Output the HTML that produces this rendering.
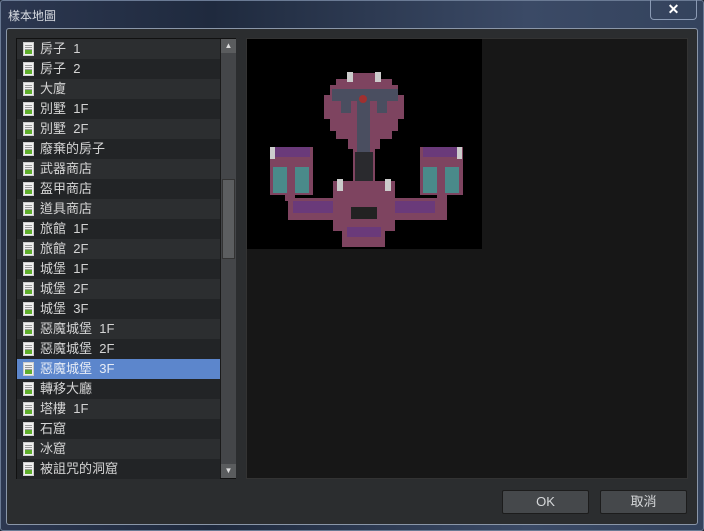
<!DOCTYPE html>
<html><head><meta charset="utf-8"><style>
*{margin:0;padding:0;box-sizing:border-box}
body{width:704px;height:531px;overflow:hidden;background:#1c2433;font-family:"Liberation Sans","Noto Sans CJK TC",sans-serif;position:relative}
.win{position:absolute;left:0;top:0;width:704px;height:531px;background:linear-gradient(90deg,#2c3750 0%,#1f2a3e 30%,#3b4a66 75%,#34435d 100%);border:1px solid #6a7a94;border-radius:3px}
.title{position:absolute;left:8px;top:7px;color:#d8dce2;font-size:12px}
.close{position:absolute;left:650px;top:0;width:47px;height:20px;border:1px solid #8a9ab4;border-top:none;border-radius:0 0 4px 4px;color:#fff;font-weight:bold;font-size:14px;text-align:center;line-height:18px}
.panel{position:absolute;left:6px;top:28px;width:692px;height:497px;background:#2b2d2f;border:1px solid #8a96a8;border-radius:3px}
.list{position:absolute;left:16px;top:38px;width:220px;height:441px;background:#242628;border:1px solid #111}
.row{position:absolute;left:0;width:203px;height:20px;color:#d4d4d4;font-size:13px;line-height:20px;padding-left:23px;white-space:pre}
.row:nth-child(odd){background:#2c2e30}
.row:nth-child(even){background:#222426}
.row.sel{background:#5c86cc;color:#e6ecf6}
.ic{position:absolute;left:6px;top:3px;width:11px;height:14px;background:#f0f0f0;border:1px solid #ccc}
.ic:before{content:"";position:absolute;left:1px;right:1px;top:2px;height:5px;background:repeating-linear-gradient(#999 0 1px,transparent 1px 2px)}
.ic:after{content:"";position:absolute;left:1px;right:1px;bottom:1px;height:4px;background:#5fae2c}
.sb{position:absolute;left:203px;top:0;width:16px;height:439px;background:#444649;border-left:1px solid #1a1a1a}
.sbb{position:absolute;left:0;width:15px;height:14px;background:#5a5c5e;color:#ddd;font-size:8px;text-align:center;line-height:14px}
.thumb{position:absolute;left:1px;top:140px;width:13px;height:80px;background:#5c5e60;border:1px solid #333}
.prev{position:absolute;left:246px;top:38px;width:442px;height:441px;background:#171717;border:1px solid #333}
.btn{position:absolute;top:490px;width:87px;height:24px;background:#45484b;border:1px solid #1c1c1c;border-radius:2px;color:#d6d8da;font-size:13px;text-align:center;line-height:22px}
</style></head><body>
<div class="win"></div>
<div class="title">樣本地圖</div>
<div class="close">✕</div>
<div class="panel"></div>
<div class="list">
<div class="row" style="top:0"><i class="ic"></i>房子  1</div>
<div class="row" style="top:20px"><i class="ic"></i>房子  2</div>
<div class="row" style="top:40px"><i class="ic"></i>大廈</div>
<div class="row" style="top:60px"><i class="ic"></i>別墅  1F</div>
<div class="row" style="top:80px"><i class="ic"></i>別墅  2F</div>
<div class="row" style="top:100px"><i class="ic"></i>廢棄的房子</div>
<div class="row" style="top:120px"><i class="ic"></i>武器商店</div>
<div class="row" style="top:140px"><i class="ic"></i>盔甲商店</div>
<div class="row" style="top:160px"><i class="ic"></i>道具商店</div>
<div class="row" style="top:180px"><i class="ic"></i>旅館  1F</div>
<div class="row" style="top:200px"><i class="ic"></i>旅館  2F</div>
<div class="row" style="top:220px"><i class="ic"></i>城堡  1F</div>
<div class="row" style="top:240px"><i class="ic"></i>城堡  2F</div>
<div class="row" style="top:260px"><i class="ic"></i>城堡  3F</div>
<div class="row" style="top:280px"><i class="ic"></i>惡魔城堡  1F</div>
<div class="row" style="top:300px"><i class="ic"></i>惡魔城堡  2F</div>
<div class="row sel" style="top:320px"><i class="ic"></i>惡魔城堡  3F</div>
<div class="row" style="top:340px"><i class="ic"></i>轉移大廳</div>
<div class="row" style="top:360px"><i class="ic"></i>塔樓  1F</div>
<div class="row" style="top:380px"><i class="ic"></i>石窟</div>
<div class="row" style="top:400px"><i class="ic"></i>冰窟</div>
<div class="row" style="top:420px"><i class="ic"></i>被詛咒的洞窟</div>
<div class="sb"><div class="sbb" style="top:0">▲</div><div class="thumb"></div><div class="sbb" style="top:425px">▼</div></div>
</div>
<div class="prev">
<svg width="235" height="210" style="position:absolute;left:0;top:0;background:#000">
<g fill="#7e4460">
<polygon points="101,34 133,34 133,40 145,40 145,46 151,46 151,56 157,56 157,80 151,80 151,92 145,92 145,100 133,100 133,110 101,110 101,100 89,100 89,92 83,92 83,80 77,80 77,56 83,56 83,46 89,46 89,40 101,40"/>
<rect x="106" y="100" width="22" height="50"/>
<rect x="23" y="108" width="43" height="48"/>
<rect x="173" y="108" width="43" height="48"/>
<rect x="38" y="152" width="10" height="10"/>
<rect x="190" y="152" width="10" height="10"/>
<rect x="41" y="159" width="159" height="22"/>
<rect x="86" y="142" width="62" height="50"/>
<rect x="95" y="185" width="43" height="23"/>
</g>
<g fill="#4a4e60"><polygon points="85,50 151,50 151,62 123,62 123,113 110,113 110,62 85,62"/><rect x="94" y="62" width="10" height="12"/><rect x="130" y="62" width="10" height="12"/></g>
<rect x="108" y="113" width="18" height="29" fill="#2a2a2e"/>
<g fill="#4a8a8a"><rect x="26" y="128" width="14" height="26"/><rect x="48" y="128" width="14" height="26"/><rect x="176" y="128" width="14" height="26"/><rect x="198" y="128" width="14" height="26"/></g>
<g fill="#6a3a7a"><rect x="26" y="108" width="37" height="10"/><rect x="176" y="108" width="37" height="10"/><rect x="46" y="162" width="40" height="12"/><rect x="148" y="162" width="40" height="12"/><rect x="100" y="188" width="34" height="10"/></g>
<rect x="104" y="168" width="26" height="12" fill="#222"/>
<g fill="#ccc"><rect x="100" y="33" width="6" height="10"/><rect x="128" y="33" width="6" height="10"/><rect x="90" y="140" width="6" height="12"/><rect x="138" y="140" width="6" height="12"/><rect x="23" y="108" width="5" height="12"/><rect x="210" y="108" width="5" height="12"/></g>
<circle cx="116" cy="60" r="4" fill="#a03030"/>
</svg>
</div>
<div class="btn" style="left:502px">OK</div>
<div class="btn" style="left:600px">取消</div>
</body></html>
